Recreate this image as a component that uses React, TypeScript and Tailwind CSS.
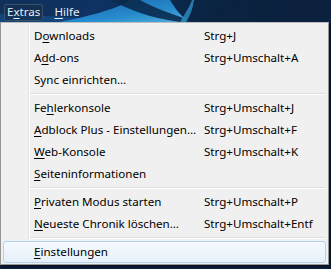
import React from "react";

type Item = { label: React.ReactNode; shortcut?: string; active?: boolean };

const U = ({ children }: { children: React.ReactNode }) => (
  <span className="underline underline-offset-2">{children}</span>
);

const groups: Item[][] = [
  [
    { label: <>D<U>o</U>wnloads</>, shortcut: "Strg+J" },
    { label: <>A<U>d</U>d-ons</>, shortcut: "Strg+Umschalt+A" },
    { label: <>Sync einrichten…</> },
  ],
  [
    { label: <>Fe<U>h</U>lerkonsole</>, shortcut: "Strg+Umschalt+J" },
    { label: <><U>A</U>dblock Plus - Einstellungen…</>, shortcut: "Strg+Umschalt+F" },
    { label: <><U>W</U>eb-Konsole</>, shortcut: "Strg+Umschalt+K" },
    { label: <><U>S</U>eiteninformationen</> },
  ],
  [
    { label: <><U>P</U>rivaten Modus starten</>, shortcut: "Strg+Umschalt+P" },
    { label: <><U>N</U>eueste Chronik löschen…</>, shortcut: "Strg+Umschalt+Entf" },
  ],
  [{ label: <><U>E</U>instellungen</>, active: true }],
];

function Row({ item }: { item: Item }) {
  return (
    <div
      className={
        "relative flex h-[22px] items-center mx-[2px] rounded-[3px] border " +
        (item.active
          ? "border-[#aed3ee] bg-gradient-to-b from-[#f5f9fd] to-[#e6f0fa]"
          : "border-transparent")
      }
    >
      <div className="w-[200px] pl-[30px] whitespace-nowrap">{item.label}</div>
      <div className="whitespace-nowrap">{item.shortcut}</div>
    </div>
  );
}

function Sep() {
  return (
    <div className="h-[6px] flex items-center pl-[29px] pr-[2px]">
      <div className="h-[2px] w-full border-t border-[#e0e0e0] border-b border-b-white" />
    </div>
  );
}

export default function App() {
  return (
    <div
      className="relative w-[331px] h-[269px] overflow-hidden bg-[#0b1f3a] text-[11.6px] text-black"
      style={{ fontFamily: '"Noto Sans", "Open Sans", sans-serif' }}
    >
      {/* title/menubar background */}
      <div className="relative h-[22px] bg-[#0a1d36]">
        <svg className="absolute inset-0" width="331" height="22" viewBox="0 0 331 22">
          <defs>
            <linearGradient id="bg" x1="0" y1="0" x2="1" y2="0">
              <stop offset="0" stopColor="#10305a" />
              <stop offset="0.3" stopColor="#0e3262" />
              <stop offset="0.6" stopColor="#0a2545" />
              <stop offset="1" stopColor="#0b1f38" />
            </linearGradient>
            <linearGradient id="sw" x1="0" y1="0" x2="1" y2="1">
              <stop offset="0" stopColor="#1a6fb8" />
              <stop offset="0.6" stopColor="#2b9ae0" />
              <stop offset="1" stopColor="#5cc8f5" />
            </linearGradient>
          </defs>
          <rect width="331" height="22" fill="url(#bg)" />
          <path d="M0 22 L0 14 C40 15 90 19 150 22 Z" fill="#14508a" opacity="0.7" />
          <path d="M60 22 C90 16 120 8 130 0 L170 0 C175 8 180 16 190 22 Z" fill="url(#sw)" opacity="0.85" />
          <path d="M110 0 C130 10 150 18 180 22 L196 22 C170 14 150 6 140 0 Z" fill="#0a2a4e" opacity="0.9" />
          <path d="M180 22 C185 14 190 6 192 0 L194 0 C193 8 190 16 186 22 Z" fill="#3ab0ee" opacity="0.6" />
          <path d="M196 0 L331 0 L331 22 L200 22 C205 14 220 6 240 0 Z" fill="#0b2240" opacity="0.7" />
        </svg>
        <div className="relative flex h-full items-center gap-[10px] pl-[4px] text-[#e6edf5]">
          <div className="h-[17px] px-[2px] flex items-center rounded-[2px] border border-[#3a5068] bg-[#14314f]/70 pb-[1px] mt-[2px]">
            E<U>x</U>tras
          </div>
          <div className="h-[17px] px-[1px] flex items-center pb-[1px] mt-[2px]">
            <U>H</U>ilfe
          </div>
        </div>
      </div>

      {/* menu */}
      <div className="relative w-[329px] h-[243px] bg-[#f0f0f0] border border-[#979797] border-t-[#bdbdbd] shadow-[2px_2px_2px_rgba(0,0,0,0.45)]">
        <div className="absolute left-[27px] top-0 bottom-0 w-[2px] border-l border-[#e2e3e3] border-r border-r-white" />
        <div className="relative pt-[2px]">
          {groups.map((g, gi) => (
            <React.Fragment key={gi}>
              {gi > 0 && <Sep />}
              {g.map((it, i) => (
                <Row key={i} item={it} />
              ))}
            </React.Fragment>
          ))}
        </div>
      </div>
    </div>
  );
}
